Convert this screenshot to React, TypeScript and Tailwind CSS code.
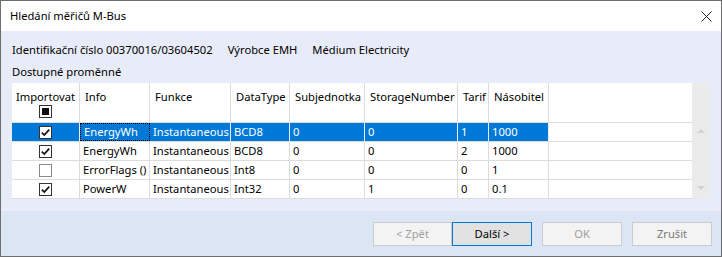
import React from "react";

const font = { fontFamily: '"Noto Sans", "Open Sans", sans-serif' };

const cols = ["w-[68px]", "w-[70px]", "w-[81px]", "w-[59px]", "w-[75px]", "w-[93px]", "w-[31px]", "w-[60px]"];
const headers = ["Importovat", "Info", "Funkce", "DataType", "Subjednotka", "StorageNumber", "Tarif", "Násobitel"];

const rows = [
  { on: true, cells: ["EnergyWh", "Instantaneous", "BCD8", "0", "0", "1", "1000"] },
  { on: true, cells: ["EnergyWh", "Instantaneous", "BCD8", "0", "0", "2", "1000"] },
  { on: false, cells: ["ErrorFlags ()", "Instantaneous", "Int8", "0", "0", "0", "1"] },
  { on: true, cells: ["PowerW", "Instantaneous", "Int32", "0", "1", "0", "0.1"] },
];

function Check({ on }: { on: boolean }) {
  return (
    <div
      className={
        "w-[13px] h-[13px] bg-white border flex items-center justify-center " +
        (on ? "border-[#333333]" : "border-[#8a8a8a]")
      }
    >
      {on ? (
        <svg width="11" height="11" viewBox="0 0 11 11">
          <path d="M1.8 5.6 L4.3 8.1 L9.2 2.6" fill="none" stroke="#111" strokeWidth="1.7" />
        </svg>
      ) : null}
    </div>
  );
}

function Btn({ label, kind, w = "w-[80px]" }: { label: string; kind: "off" | "focus" | "cancel"; w?: string }) {
  const cls =
    kind === "focus"
      ? "bg-[#e1e1e1] border-[#0078d7] text-black"
      : kind === "cancel"
        ? "bg-[#f3f3f3] border-[#cccccc] text-[#7a7a7a]"
        : "bg-[#f3f3f3] border-[#cccccc] text-[#a0a0a0]";
  return (
    <div className={"h-[24px] border flex items-center justify-center " + w + " " + cls}>
      {label}
    </div>
  );
}

export default function App() {
  return (
    <div
      style={font}
      className="w-[722px] h-[257px] border border-[#6e6e6e] flex flex-col bg-[#e8ecf8] text-[11.2px] text-black overflow-hidden"
    >
      <div className="h-[30px] bg-white flex items-center justify-between pl-[9px] pr-[9px] shrink-0">
        <span>Hledání měřičů M-Bus</span>
        <svg width="11" height="11" viewBox="0 0 11 11">
          <path d="M0.5 0.5 L10.5 10.5 M10.5 0.5 L0.5 10.5" stroke="#222" strokeWidth="1" />
        </svg>
      </div>

      <div className="pl-[11px] pt-[11px] flex flex-col shrink-0">
        <div className="h-[16px] leading-[16px] flex">
          <span>Identifikační číslo 00370016/03604502</span>
          <span className="ml-[15px]">Výrobce EMH</span>
          <span className="ml-[15px]">Médium Electricity</span>
        </div>
        <div className="h-[16px] leading-[16px] mt-[6px]">Dostupné proměnné</div>

        <div className="mt-[3px] flex h-[116px]">
          <div className="w-[680px] bg-white flex flex-col">
            <div className="h-[40px] flex border-b border-[#dcdcdc]">
              {headers.map((h, i) => (
                <div
                  key={h}
                  className={
                    cols[i] +
                    " border-r border-[#dcdcdc] pt-[6px] leading-[16px] whitespace-nowrap " +
                    (i === 0 ? "flex flex-col items-center" : "pl-[5px]")
                  }
                >
                  <span>{h}</span>
                  {i === 0 ? (
                    <div className="w-[13px] h-[13px] border border-[#333333] bg-white flex items-center justify-center">
                      <div className="w-[7px] h-[7px] bg-[#111]" />
                    </div>
                  ) : null}
                </div>
              ))}
              <div className="flex-1" />
            </div>
            {rows.map((r, ri) => {
              const sel = ri === 0;
              return (
                <div key={ri} className="h-[19px] flex border-b border-[#dcdcdc]">
                  <div
                    className={
                      cols[0] +
                      " border-r flex items-center justify-center " +
                      (sel ? "bg-[#0078d7] border-[#e8f1fb]" : "border-[#dcdcdc]")
                    }
                  >
                    <Check on={r.on} />
                  </div>
                  {r.cells.map((c, ci) => (
                    <div
                      key={ci}
                      className={
                        cols[ci + 1] +
                        " pl-[3px] whitespace-nowrap overflow-hidden " +
                        (sel
                          ? "bg-[#0078d7] text-white " +
                            (ci === 0
                              ? "border border-dotted border-black leading-[16px] pl-[2px]"
                              : "border-r border-[#e8f1fb] leading-[18px]")
                          : "border-r border-[#dcdcdc] leading-[18px]")
                      }
                    >
                      {c}
                    </div>
                  ))}
                  <div className="flex-1" />
                </div>
              );
            })}
          </div>
          <div className="w-[18px] bg-[#ebebeb] flex flex-col items-center justify-between pt-[45px] pb-[8px]">
            <svg width="8" height="5" viewBox="0 0 8 5">
              <path d="M0 5 L4 1 L8 5 Z" fill="#d2d2d2" />
            </svg>
            <svg width="8" height="5" viewBox="0 0 8 5">
              <path d="M0 0 L4 4 L8 0 Z" fill="#d2d2d2" />
            </svg>
          </div>
        </div>
      </div>

      <div className="mt-[12px] flex-1 bg-[#dce5f3] flex justify-end items-start pt-[11px] pr-[9px]">
        <div className="flex">
          <Btn label="< Zpět" kind="off" w="w-[79px]" />
          <Btn label="Další >" kind="focus" />
        </div>
        <div className="ml-[10px]">
          <Btn label="OK" kind="off" />
        </div>
        <div className="ml-[10px]">
          <Btn label="Zrušit" kind="cancel" />
        </div>
      </div>
    </div>
  );
}
